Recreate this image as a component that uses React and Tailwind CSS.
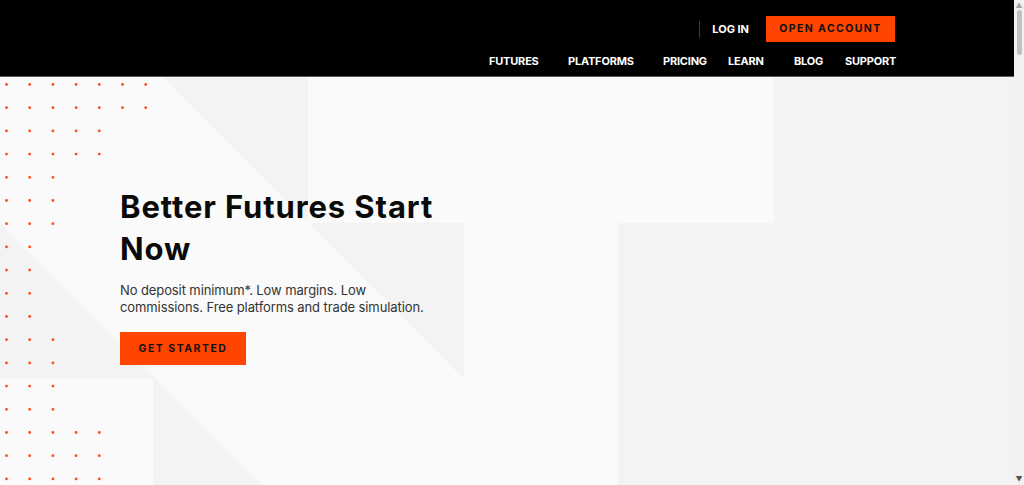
import React from 'react';

const dotRows = [7, 7, 5, 5, 3, 3, 3, 2, 2, 2, 2, 3, 3, 3, 3, 5, 5, 5];

const navItems = [
    { label: 'FUTURES', w: 'w-[79px]' },
    { label: 'PLATFORMS', w: 'w-[95px]' },
    { label: 'PRICING', w: 'w-[65px]' },
    { label: 'LEARN', w: 'w-[66px]' },
    { label: 'BLOG', w: 'w-[51px]' },
    { label: 'SUPPORT', w: 'w-[50px]' },
];

// decorative backdrop: grey facets and the orange dot grid
function HeroBackdrop() {
    return (
        <svg className="absolute inset-0 h-full w-full" viewBox="0 0 1014 408" preserveAspectRatio="none">
            <rect x="0" y="0" width="1014" height="408" fill="#fafafa" />
            <polygon points="163,0 308,0 308,146 464,146 464,302" fill="#f3f3f3" />
            <polygon points="774,0 1014,0 1014,408 618,408 618,146 774,146" fill="#f3f3f3" />
            <polygon points="0,146 262,408 153,408 153,301 0,301" fill="#f3f3f3" />
            {dotRows.map((count, row) =>
                Array.from({ length: count }).map((_, i) => (
                    <circle key={`${row}-${i}`} cx={6.5 + i * 23.2} cy={7.5 + row * 23.2} r="1.4" fill="#ff4d1a" />
                ))
            )}
        </svg>
    );
}

function Header() {
    return (
        <header className="h-[77px] shrink-0 bg-black border-b border-[#5a5a5a] pr-[119px] flex flex-col items-end pt-[16px]">
            <div className="flex items-center h-[26px]">
                <span className="w-px h-[17px] bg-[#3a3a3a]" />
                <a className="ml-[12px] text-white text-[11px] font-bold">LOG IN</a>
                <button className="ml-[17px] w-[129px] h-[26px] bg-[#ff4400] text-[#111] text-[10.5px] font-bold tracking-[1.4px] flex items-center justify-center">
                    OPEN ACCOUNT
                </button>
            </div>
            <nav className="flex mt-[11px] h-[16px] items-center">
                {navItems.map((item) => (
                    <a key={item.label} className={`${item.w} text-white text-[11px] font-bold leading-[16px] tracking-[-0.2px]`}>
                        {item.label}
                    </a>
                ))}
            </nav>
        </header>
    );
}

export default function App() {
    return (
        <div className="flex h-[485px] w-full overflow-hidden" style={{ fontFamily: 'Inter, "Noto Sans", sans-serif' }}>
            <div className="flex-1 flex flex-col">
                <Header />
                <section className="relative flex-1">
                    <HeroBackdrop />
                    <div className="relative pl-[120px] pt-[109px]">
                        <h1 className="text-[31px] font-bold leading-[42px] text-[#0a0a0a] tracking-[0.9px]">
                            Better Futures Start
                            <br />
                            Now
                        </h1>
                        <p className="mt-[12px] text-[13px] leading-[17px] text-[#333] tracking-[-0.1px]">
                            No deposit minimum*. Low margins. Low
                            <br />
                            commissions. Free platforms and trade simulation.
                        </p>
                        <button className="mt-[16px] w-[126px] h-[33px] bg-[#ff4400] text-[#111] text-[10.5px] font-bold tracking-[1.5px] flex items-center justify-center">
                            GET STARTED
                        </button>
                    </div>
                </section>
            </div>
            <div className="w-[10px] bg-[#f1f1f1] flex flex-col items-center">
                <span className="mt-[2px] text-[7px] leading-[7px] text-[#a3a3a3]">▲</span>
                <span className="mt-[1px] w-[5px] h-[45px] rounded-full bg-[#c1c1c1]" />
                <span className="mt-auto mb-[2px] text-[7px] leading-[7px] text-[#505050]">▼</span>
            </div>
        </div>
    );
}
